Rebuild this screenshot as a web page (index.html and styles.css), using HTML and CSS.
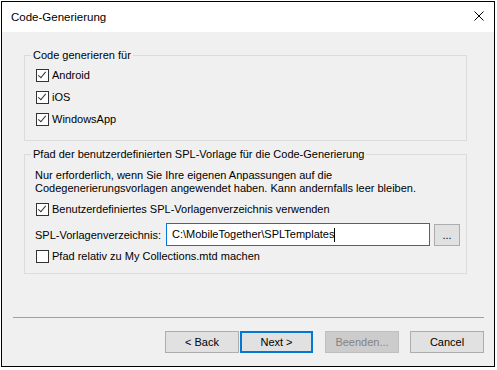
FILE: index.html
```html
<!DOCTYPE html>
<html>

<head>
    <title>Code-Generierung</title>
    <link rel="stylesheet" href="styles.css">
</head>

<body>
    <div class="window">
        <div class="titlebar">
            <span class="title">Code-Generierung</span>
            <svg class="close" width="10" height="10" viewBox="0 0 10 10">
                <path d="M0.5 0.5 L9.5 9.5 M9.5 0.5 L0.5 9.5" stroke="#000" stroke-width="1" fill="none" />
            </svg>
        </div>

        <div class="content">
            <fieldset class="group group-targets">
                <legend>Code generieren für</legend>
                <label class="check-row">
                    <span class="box checked"></span>Android
                </label>
                <label class="check-row">
                    <span class="box checked"></span>iOS
                </label>
                <label class="check-row">
                    <span class="box checked"></span>WindowsApp
                </label>
            </fieldset>

            <fieldset class="group group-path">
                <legend>Pfad der benutzerdefinierten SPL-Vorlage für die Code-Generierung</legend>
                <p class="hint">Nur erforderlich, wenn Sie Ihre eigenen Anpassungen auf die<br>
                    Codegenerierungsvorlagen angewendet haben. Kann andernfalls leer bleiben.</p>
                <label class="check-row">
                    <span class="box checked"></span>Benutzerdefiniertes SPL-Vorlagenverzeichnis verwenden
                </label>
                <div class="path-row">
                    <span class="path-label">SPL-Vorlagenverzeichnis:</span>
                    <div class="path-input">C:\MobileTogether\SPLTemplates<span class="caret"></span></div>
                    <button class="browse">...</button>
                </div>
                <label class="check-row last">
                    <span class="box"></span>Pfad relativ zu My Collections.mtd machen
                </label>
            </fieldset>

            <div class="separator"></div>

            <div class="buttons">
                <button class="btn back">&lt; Back</button>
                <button class="btn next">Next &gt;</button>
                <button class="btn finish" disabled>Beenden...</button>
                <button class="btn cancel">Cancel</button>
            </div>
        </div>
    </div>
</body>

</html>
```

FILE: styles.css
```css
:root {
    --dialog-background: #f0f0f0;
    --group-border: #dcdcdc;
    --button-background: #e1e1e1;
    --button-border: #adadad;
    --focus-color: #0078d7;
    --text-color: #000;
}

body {
    margin: 0;
    background-color: #fff;
    font-family: "Liberation Sans", Arial, sans-serif;
    font-size: 11px;
    color: var(--text-color);
}

.window {
    margin: 1px 0 0 1px;
    width: 492px;
    height: 364px;
    border: 1px solid #000;
    background-color: var(--dialog-background);
}

.titlebar {
    height: 30px;
    background-color: #fff;
    display: flex;
    align-items: center;
    justify-content: space-between;
    padding: 0 10px 0 9px;
}

.title {
    font-size: 11.5px;
    margin-top: -1px;
}

.close {
    display: block;
    margin-top: -2px;
}

.content {
    padding-top: 16px;
    white-space: nowrap;
}

/* group boxes */
.group {
    margin: 0 0 0 22px;
    width: 430px;
    padding: 0 0 0 11px;
    border: 1px solid var(--group-border);
    min-width: 0;
}

.group legend {
    padding: 0 2px;
    margin-left: -5px;
    line-height: 14px;
}

.group-targets {
    padding-bottom: 14px;
}

.group-path {
    margin-top: 6px;
    padding-bottom: 10px;
}

.check-row {
    display: flex;
    align-items: center;
    height: 13px;
    margin-top: 9px;
    line-height: 13px;
}

.group-targets .check-row:first-of-type {
    margin-top: 7px;
}

.box {
    width: 11px;
    height: 11px;
    border: 1px solid #333;
    background-color: #fff;
    margin-right: 3px;
    flex: none;
    position: relative;
}

.box.checked::after {
    content: "";
    position: absolute;
    left: 3px;
    top: 0px;
    width: 3px;
    height: 7px;
    border-right: 1px solid #333;
    border-bottom: 1px solid #333;
    transform: rotate(40deg);
}

.hint {
    margin: 8px 0 0 -1px;
    line-height: 13px;
}

.group-path .hint+.check-row {
    margin-top: 8px;
}

.path-row {
    display: flex;
    align-items: center;
    margin: 7px 0 0 -1px;
    height: 23px;
}

.path-label {
    width: 131px;
}

.path-input {
    box-sizing: border-box;
    width: 264px;
    height: 23px;
    border: 1px solid var(--focus-color);
    background-color: #fff;
    padding: 0 0 0 5px;
    line-height: 21px;
    display: flex;
    align-items: center;
}

.caret {
    display: inline-block;
    width: 1px;
    height: 14px;
    background-color: #000;
}

.browse {
    box-sizing: border-box;
    width: 26px;
    height: 22px;
    margin: 1px 0 0 4px;
    border: 1px solid var(--button-border);
    background-color: var(--button-background);
    font-family: inherit;
    font-size: 11px;
    padding: 0;
}

.check-row.last {
    margin-top: 4px;
}

.separator {
    margin: 43px 0 0 11px;
    width: 471px;
    height: 0;
    border-top: 1px solid #a0a0a0;
}

.buttons {
    display: flex;
    justify-content: flex-end;
    padding-right: 10px;
    margin-top: 13px;
}

.btn {
    box-sizing: border-box;
    width: 74px;
    height: 22px;
    border: 1px solid var(--button-border);
    background-color: var(--button-background);
    font-family: inherit;
    font-size: 11px;
    color: var(--text-color);
    padding: 0;
}

.btn.next {
    width: 73px;
    border: 2px solid var(--focus-color);
    margin-left: 1px;
}

.btn.finish {
    margin-left: 12px;
    background-color: #cccccc;
    border-color: #bfbfbf;
    color: #838383;
}

.btn.cancel {
    margin-left: 11px;
}
```
